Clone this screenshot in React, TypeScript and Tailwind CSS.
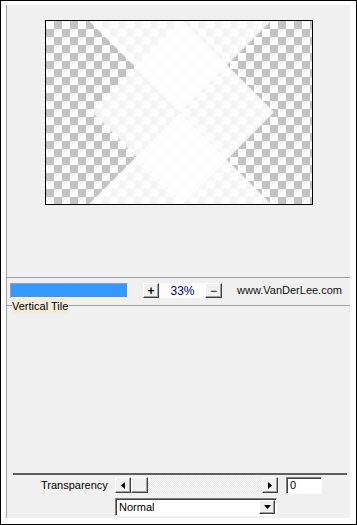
import React from 'react';

const raised =
  'border border-t-white border-l-white border-r-[#404040] border-b-[#404040] shadow-[inset_-1px_-1px_0_#a0a0a0] bg-[#f0f0f0]';
const sunken =
  'border border-t-[#808080] border-l-[#808080] border-r-white border-b-white shadow-[inset_1px_1px_0_#404040]';

const Preview: React.FC = () => (
  <div className="w-[268px] h-[185px] border border-black bg-white">
    <svg width="266" height="183" viewBox="0 0 266 183">
      <defs>
        <pattern id="chk" width="16" height="16" patternUnits="userSpaceOnUse">
          <rect width="16" height="16" fill="#ffffff" />
          <rect x="8" y="0" width="8" height="8" fill="#c3c3c3" />
          <rect x="0" y="8" width="8" height="8" fill="#c3c3c3" />
        </pattern>
      </defs>
      <rect width="266" height="183" fill="url(#chk)" />
      <polygon points="43,0 225,0 134,91" fill="#fff" opacity="0.82" />
      <polygon points="43,183 225,183 134,92" fill="#fff" opacity="0.82" />
      <polygon points="46,91 137,0 228,91 137,183" fill="#fff" opacity="0.82" />
    </svg>
  </div>
);

const Arrow: React.FC<{ dir: 'left' | 'right' | 'down' }> = ({ dir }) => {
  const pts = dir === 'left' ? '4,0 4,7 0,3.5' : dir === 'right' ? '0,0 0,7 4,3.5' : '0,0 7,0 3.5,4';
  const w = dir === 'down' ? 7 : 4;
  const h = dir === 'down' ? 4 : 7;
  return (
    <svg width={w} height={h} viewBox={`0 0 ${w} ${h}`}>
      <polygon points={pts} fill="#000" />
    </svg>
  );
};

export default function App() {
  return (
    <div
      className="w-[357px] h-[525px] bg-white border border-black pt-[4px] pl-[5px] text-[11px] text-black"
      style={{ fontFamily: '"Liberation Sans", Arial, sans-serif' }}
    >
      <div className="w-[344px] h-[513px] bg-[#f0f0f0] border-l border-[#a0a0a0] flex flex-col">
        {/* preview area */}
        <div className="h-[273px] border-b border-[#a0a0a0] pt-[15px] pl-[38px]">
          <Preview />
        </div>

        {/* zoom row */}
        <div className="flex items-center mt-[5px] h-[15px]">
          <div className={`ml-[3px] w-[118px] h-[15px] bg-[#3399ff] border border-t-[#a0a0a0] border-l-[#a0a0a0] border-r-white border-b-white`} />
          <button className={`ml-[15px] w-[16px] h-[15px] ${raised} flex items-center justify-center text-[12px] font-bold leading-none`}>
            +
          </button>
          <div className="ml-[1px] w-[45px] h-[15px] bg-[#fcfcfc] text-[#000080] flex items-center justify-center text-[12px]">
            33%
          </div>
          <button className={`w-[17px] h-[15px] ${raised} flex items-center justify-center text-[12px] leading-none`}>
            −
          </button>
          <span className="ml-[15px] text-[11px] text-[#111]">www.VanDerLee.com</span>
        </div>

        {/* group box */}
        <div className="relative mt-[7px] flex-1 border-t border-[#a0a0a0]">
          <span className="absolute left-[5px] -top-[8px] h-[16px] leading-[16px] bg-[#f3ecdb] pr-[1px]">
            Vertical Tile
          </span>

          <div className="mt-[167px] ml-[6px] w-[334px] h-[2px] bg-[#5e5e5e]" />

          <div className="flex items-center mt-[2px] h-[16px]">
            <span className="ml-[34px] w-[70px]">Transparency</span>
            <div className="ml-[4px] flex h-[16px] w-[163px]">
              <div className={`w-[16px] h-[16px] ${raised} flex items-center justify-center`}>
                <Arrow dir="left" />
              </div>
              <div className={`w-[17px] h-[16px] ${raised}`} />
              <div className="flex-1 h-[16px] bg-[repeating-conic-gradient(#ffffff_0_25%,#e4e4e4_0_50%)] bg-[length:2px_2px]" />
              <div className={`w-[16px] h-[16px] ${raised} flex items-center justify-center`}>
                <Arrow dir="right" />
              </div>
            </div>
            <div className={`ml-[8px] w-[36px] h-[17px] bg-white ${sunken} pl-[3px] leading-[14px]`}>0</div>
          </div>

          <div className={`mt-[5px] ml-[108px] w-[162px] h-[18px] bg-white ${sunken} flex items-center`}>
            <span className="pl-[3px] flex-1">Normal</span>
            <div className={`w-[16px] h-[14px] mr-[1px] ${raised} flex items-center justify-center`}>
              <Arrow dir="down" />
            </div>
          </div>
        </div>
      </div>
    </div>
  );
}
